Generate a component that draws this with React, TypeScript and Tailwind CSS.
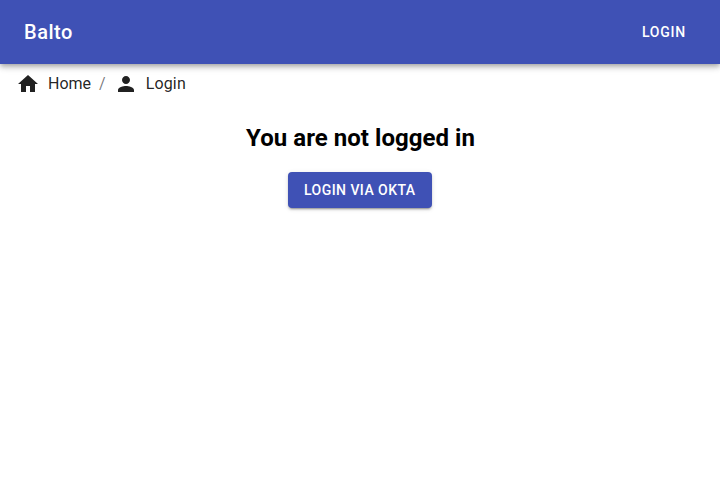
import React from "react";

const raised =
  "shadow-[0px_3px_1px_-2px_rgba(0,0,0,0.2),0px_2px_2px_0px_rgba(0,0,0,0.14),0px_1px_5px_0px_rgba(0,0,0,0.12)]";

function HomeIcon() {
  return (
    <svg viewBox="0 0 24 24" className="mr-2 size-6 fill-current" aria-hidden="true">
      <path d="M10 20v-6h4v6h5v-8h3L12 3 2 12h3v8z" />
    </svg>
  );
}

function PersonIcon() {
  return (
    <svg viewBox="0 0 24 24" className="mr-2 size-6 fill-current" aria-hidden="true">
      <path d="M12 12c2.21 0 4-1.79 4-4s-1.79-4-4-4-4 1.79-4 4 1.79 4 4 4zm0 2c-2.67 0-8 1.34-8 4v2h16v-2c0-2.66-5.33-4-8-4z" />
    </svg>
  );
}

export default function App() {
  return (
    <div className="min-h-screen bg-white font-['Roboto',sans-serif]">
      <header className="flex h-16 items-center justify-between bg-[#3f51b5] px-6 text-white shadow-[0px_2px_4px_-1px_rgba(0,0,0,0.2),0px_4px_5px_0px_rgba(0,0,0,0.14),0px_1px_10px_0px_rgba(0,0,0,0.12)]">
        <h1 className="text-xl leading-8 font-medium tracking-[0.5px]">Balto</h1>
        <button className="min-w-16 rounded px-2 py-1.5 text-sm leading-6 font-medium tracking-[0.8px] uppercase">
          Login
        </button>
      </header>
      <nav className="flex items-center px-4 py-2 text-base leading-6 text-black/[0.87]">
        <a className="flex items-center">
          <HomeIcon />
          Home
        </a>
        <span className="mx-2 text-black/[0.54]">/</span>
        <span className="flex items-center tracking-[0.15px]">
          <PersonIcon />
          Login
        </span>
      </nav>
      <main className="flex flex-col items-center pt-5 text-black">
        <h2 className="mb-5 pl-px text-2xl leading-7 font-bold tracking-[0.04px]">You are not logged in</h2>
        <button
          className={`w-36 rounded bg-[#3f51b5] px-4 py-1.5 text-left text-sm leading-6 font-medium tracking-[0.45px] whitespace-nowrap text-white uppercase ${raised}`}
        >
          Login via Okta
        </button>
      </main>
    </div>
  );
}
